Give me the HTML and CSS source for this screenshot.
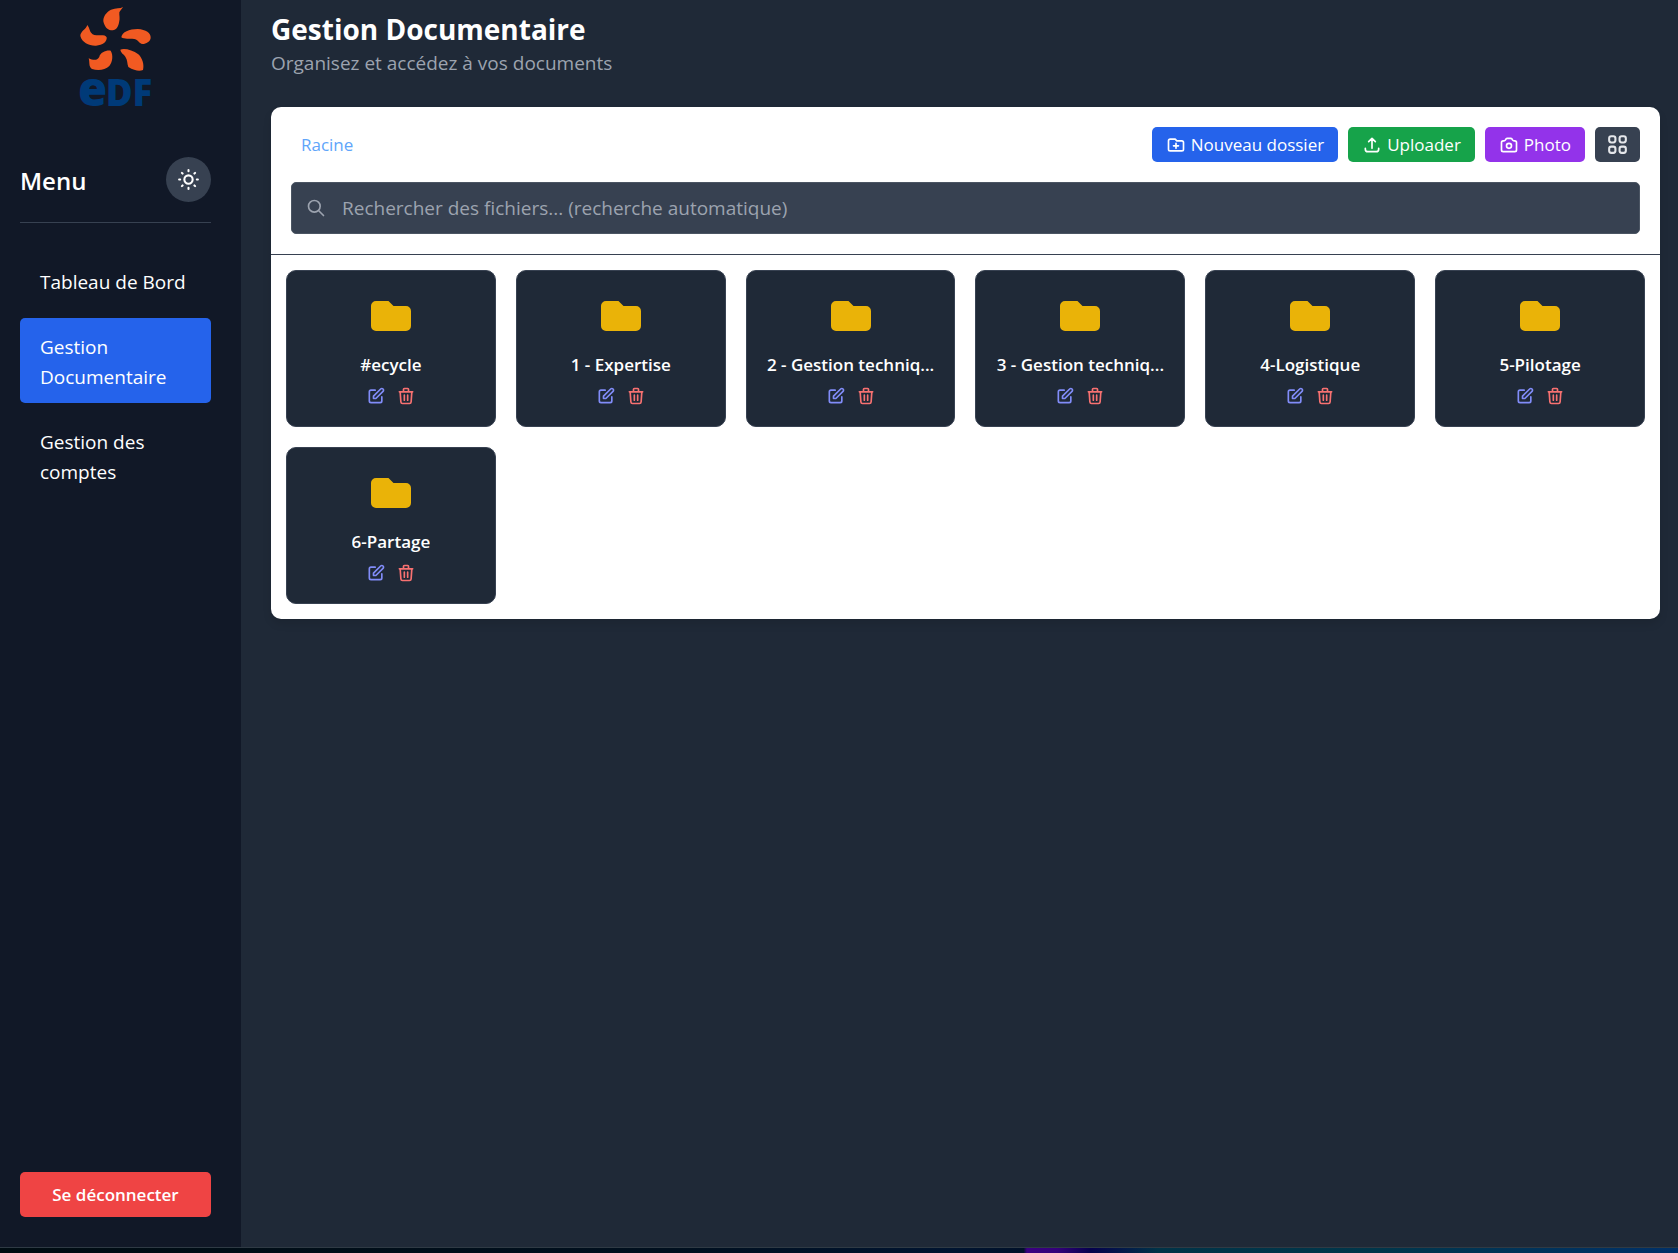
FILE: index.html
```html
<!DOCTYPE html>
<html lang="fr">
<head>
<meta charset="utf-8">
<meta name="viewport" content="width=device-width, initial-scale=1">
<title>Gestion Documentaire</title>
<link rel="stylesheet" href="styles.css">
</head>
<body>
<svg class="sprite" aria-hidden="true">
  <symbol id="folder" viewBox="0 0 20 20"><path fill="currentColor" d="M2 6a2 2 0 012-2h5l2 2h5a2 2 0 012 2v6a2 2 0 01-2 2H4a2 2 0 01-2-2V6z"/></symbol>
  <symbol id="edit" viewBox="0 0 24 24"><path d="M11 5H6a2 2 0 00-2 2v11a2 2 0 002 2h11a2 2 0 002-2v-5m-1.414-9.414a2 2 0 112.828 2.828L11.828 15H9v-2.828l8.586-8.586z"/></symbol>
  <symbol id="trash" viewBox="0 0 24 24"><path d="M19 7l-.867 12.142A2 2 0 0116.138 21H7.862a2 2 0 01-1.995-1.858L5 7m5 4v6m4-6v6m1-10V4a1 1 0 00-1-1h-4a1 1 0 00-1 1v3M4 7h16"/></symbol>
</svg>
<div class="app">
  <aside class="sidebar">
    <svg class="logo" viewBox="0 0 330 345" role="img" aria-label="EDF">
      <g fill="#f15a22">
        <path d="M186 21C178 26 165 24 150 29C135 37 126 50 127 64C130 78 138 90 150 91C168 91 171 79 174 68C178 55 174 45 175 37C178 31 182 27 186 21Z"/>
        <path d="M79 75C75 88 58 94 58 108C63 128 85 138 105 137C125 136 139 125 137 112C132 102 115 108 100 105C84 99 88 86 79 75Z"/>
        <path d="M181 112C183 96 205 87 230 87C255 89 270 98 269 114C268 125 255 132 245 132C232 130 235 121 220 117C205 114 190 119 181 112Z"/>
        <path d="M83 175C100 183 111 180 115 170C118 158 135 150 149 152C157 165 155 185 145 198C132 211 110 212 93 207C82 200 87 188 83 175Z"/>
        <path d="M178 149C190 144 215 150 232 163C245 175 250 195 246 210C235 214 220 212 202 201C198 190 200 180 193 170C188 162 180 160 178 149Z"/>
      </g>
      <g class="logo-text"><text x="51" y="318" font-size="142">e</text><text x="134" y="318" font-size="110">DF</text></g>
    </svg>
    <div class="menu-head">
      <h2>Menu</h2>
      <button class="theme" type="button" aria-label="Changer de thème">
        <svg class="icon icon-lg" viewBox="0 0 24 24"><path d="M12 3v1m0 16v1m9-9h-1M4 12H3m15.364 6.364l-.707-.707M6.343 6.343l-.707-.707m12.728 0l-.707.707M6.343 17.657l-.707.707M16 12a4 4 0 11-8 0 4 4 0 018 0z"/></svg>
      </button>
    </div>
    <nav class="nav">
      <a href="#">Tableau de Bord</a>
      <a href="#" class="active" aria-current="page">Gestion Documentaire</a>
      <a href="#">Gestion des comptes</a>
    </nav>
    <button class="logout" type="button">Se déconnecter</button>
  </aside>
  <main class="main">
    <h1>Gestion Documentaire</h1>
    <p class="subtitle">Organisez et accédez à vos documents</p>
    <section class="panel">
      <header class="panel-head">
        <div class="toolbar">
          <a class="crumb" href="#">Racine</a>
          <div class="actions">
            <button class="btn blue" type="button"><svg class="icon" viewBox="0 0 24 24"><path d="M9 13h6m-3-3v6m-9 1V7a2 2 0 012-2h6l2 2h6a2 2 0 012 2v8a2 2 0 01-2 2H5a2 2 0 01-2-2z"/></svg>Nouveau dossier</button>
            <button class="btn green" type="button"><svg class="icon" viewBox="0 0 24 24"><path d="M4 16v1a3 3 0 003 3h10a3 3 0 003-3v-1m-4-8l-4-4m0 0L8 8m4-4v12"/></svg>Uploader</button>
            <button class="btn purple" type="button"><svg class="icon" viewBox="0 0 24 24"><path d="M3 9a2 2 0 012-2h.93a2 2 0 001.664-.89l.812-1.22A2 2 0 0110.07 4h3.86a2 2 0 011.664.89l.812 1.22A2 2 0 0018.07 7H19a2 2 0 012 2v9a2 2 0 01-2 2H5a2 2 0 01-2-2V9z"/><path d="M15 13a3 3 0 11-6 0 3 3 0 016 0z"/></svg>Photo</button>
            <button class="btn view" type="button" aria-label="Affichage en grille"><svg class="icon icon-lg" viewBox="0 0 24 24"><path d="M4 6a2 2 0 012-2h2a2 2 0 012 2v2a2 2 0 01-2 2H6a2 2 0 01-2-2V6zM14 6a2 2 0 012-2h2a2 2 0 012 2v2a2 2 0 01-2 2h-2a2 2 0 01-2-2V6zM4 16a2 2 0 012-2h2a2 2 0 012 2v2a2 2 0 01-2 2H6a2 2 0 01-2-2v-2zM14 16a2 2 0 012-2h2a2 2 0 012 2v2a2 2 0 01-2 2h-2a2 2 0 01-2-2v-2z"/></svg></button>
          </div>
        </div>
        <label class="search">
          <svg class="icon" viewBox="0 0 24 24"><path d="M21 21l-6-6m2-5a7 7 0 11-14 0 7 7 0 0114 0z"/></svg>
          <input type="search" placeholder="Rechercher des fichiers... (recherche automatique)" aria-label="Rechercher des fichiers">
        </label>
      </header>
      <div class="grid">
        <article class="folder"><svg class="folder-icon"><use href="#folder"/></svg><h3>#ecycle</h3><div class="tools"><button class="edit" type="button" aria-label="Renommer"><svg class="icon"><use href="#edit"/></svg></button><button class="delete" type="button" aria-label="Supprimer"><svg class="icon"><use href="#trash"/></svg></button></div></article>
        <article class="folder"><svg class="folder-icon"><use href="#folder"/></svg><h3>1 - Expertise</h3><div class="tools"><button class="edit" type="button" aria-label="Renommer"><svg class="icon"><use href="#edit"/></svg></button><button class="delete" type="button" aria-label="Supprimer"><svg class="icon"><use href="#trash"/></svg></button></div></article>
        <article class="folder"><svg class="folder-icon"><use href="#folder"/></svg><h3>2 - Gestion techniq...</h3><div class="tools"><button class="edit" type="button" aria-label="Renommer"><svg class="icon"><use href="#edit"/></svg></button><button class="delete" type="button" aria-label="Supprimer"><svg class="icon"><use href="#trash"/></svg></button></div></article>
        <article class="folder"><svg class="folder-icon"><use href="#folder"/></svg><h3>3 - Gestion techniq...</h3><div class="tools"><button class="edit" type="button" aria-label="Renommer"><svg class="icon"><use href="#edit"/></svg></button><button class="delete" type="button" aria-label="Supprimer"><svg class="icon"><use href="#trash"/></svg></button></div></article>
        <article class="folder"><svg class="folder-icon"><use href="#folder"/></svg><h3>4-Logistique</h3><div class="tools"><button class="edit" type="button" aria-label="Renommer"><svg class="icon"><use href="#edit"/></svg></button><button class="delete" type="button" aria-label="Supprimer"><svg class="icon"><use href="#trash"/></svg></button></div></article>
        <article class="folder"><svg class="folder-icon"><use href="#folder"/></svg><h3>5-Pilotage</h3><div class="tools"><button class="edit" type="button" aria-label="Renommer"><svg class="icon"><use href="#edit"/></svg></button><button class="delete" type="button" aria-label="Supprimer"><svg class="icon"><use href="#trash"/></svg></button></div></article>
        <article class="folder"><svg class="folder-icon"><use href="#folder"/></svg><h3>6-Partage</h3><div class="tools"><button class="edit" type="button" aria-label="Renommer"><svg class="icon"><use href="#edit"/></svg></button><button class="delete" type="button" aria-label="Supprimer"><svg class="icon"><use href="#trash"/></svg></button></div></article>
      </div>
    </section>
  </main>
</div>
<div class="strip"></div>
</body>
</html>
```
FILE: styles.css
```css
* { box-sizing: border-box; margin: 0; padding: 0; }

body {
  display: flex;
  flex-direction: column;
  min-height: 100vh;
  background: #1f2937;
  color: #fff;
  font-family: "Open Sans", "Noto Sans", sans-serif;
  font-size: 19px;
  line-height: 30px;
}

a { color: inherit; text-decoration: none; }
button { border: 0; background: none; color: inherit; font: inherit; cursor: pointer; }
svg { display: block; flex: none; }

.sprite { width: 0; height: 0; position: absolute; }
.icon {
  width: 20px;
  height: 20px;
  fill: none;
  stroke: currentColor;
  stroke-width: 2;
  stroke-linecap: round;
  stroke-linejoin: round;
}
.icon-lg { width: 25px; height: 25px; }

.app { display: flex; flex: 1; }

/* Sidebar */
.sidebar {
  display: flex;
  flex-direction: column;
  flex: none;
  width: 241px;
  padding: 0 30px 30px 20px;
  background: #111827;
}
.logo { width: 110px; height: 115px; align-self: center; overflow: visible; }
.logo-text { fill: #003a78; font-weight: 800; }
.menu-head {
  display: flex;
  align-items: center;
  justify-content: space-between;
  margin-top: 42px;
  padding-bottom: 20px;
  border-bottom: 1px solid #374151;
}
h2 { padding-top: 2px; font-size: 24px; font-weight: 600; line-height: 35px; }
.theme {
  display: flex;
  align-items: center;
  justify-content: center;
  width: 45px;
  height: 45px;
  border-radius: 50%;
  background: #374151;
}
.nav { display: flex; flex-direction: column; gap: 10px; margin-top: 30px; }
.nav a { padding: 14px 20px 11px; border-radius: 5px; }
.nav .active { background: #2563eb; }
.logout {
  margin-top: auto;
  height: 45px;
  border-radius: 5px;
  background: #ef4444;
  font-size: 17px;
  font-weight: 600;
}

/* Main area */
.main { flex: 1; min-width: 0; padding: 10px 18px 30px 30px; }
h1 { font-size: 28px; font-weight: 700; line-height: 38px; }
.subtitle { color: #9ca3af; }
.panel {
  margin-top: 29px;
  border-radius: 10px;
  background: #fff;
  box-shadow: 0 5px 8px rgba(0, 0, 0, 0.1);
}
.panel-head { padding: 20px; border-bottom: 1px solid #374151; }
.toolbar { display: flex; align-items: center; justify-content: space-between; }
.crumb { padding: 0 10px; color: #60a5fa; font-size: 17px; }
.actions { display: flex; gap: 10px; }
.btn {
  display: flex;
  align-items: center;
  gap: 5px;
  height: 35px;
  padding: 0 14px;
  border-radius: 5px;
  font-size: 17px;
}
.blue { background: #2563eb; }
.green { background: #16a34a; }
.purple { background: #9333ea; }
.view { padding: 0 10px; background: #374151; color: #e5e7eb; }
.search {
  display: flex;
  align-items: center;
  gap: 16px;
  height: 52px;
  margin-top: 20px;
  padding: 0 14px;
  border: 1px solid #4b5563;
  border-radius: 5px;
  background: #374151;
  color: #9ca3af;
}
.search input { flex: 1; min-width: 0; border: 0; outline: 0; background: none; color: #fff; font: inherit; }
.search input::placeholder { color: #9ca3af; opacity: 1; }

/* Folder cards */
.grid {
  display: grid;
  grid-template-columns: repeat(6, minmax(0, 1fr));
  gap: 20px;
  padding: 15px;
}
.folder {
  display: flex;
  flex-direction: column;
  align-items: center;
  padding: 20px;
  border: 1px solid #374151;
  border-radius: 10px;
  background: #1f2937;
}
.folder-icon { width: 50px; height: 50px; color: #eab308; }
h3 {
  max-width: 100%;
  margin: 11px 0 9px;
  overflow: hidden;
  font-size: 17px;
  font-weight: 600;
  line-height: 25px;
  white-space: nowrap;
}
.tools { display: flex; gap: 10px; }
.edit { color: #818cf8; }
.delete { color: #f87171; }

.strip {
  height: 6px;
  border-top: 1px solid #2f3a44;
  background: linear-gradient(90deg, #000c12 0%, #000f1e 40%, #001430 57%, #001028 61%, #3b0080 61.2%, #34007a 63%, #05004c 65%, #003347 69%, #00364a 82%, #003068 100%);
}
```
